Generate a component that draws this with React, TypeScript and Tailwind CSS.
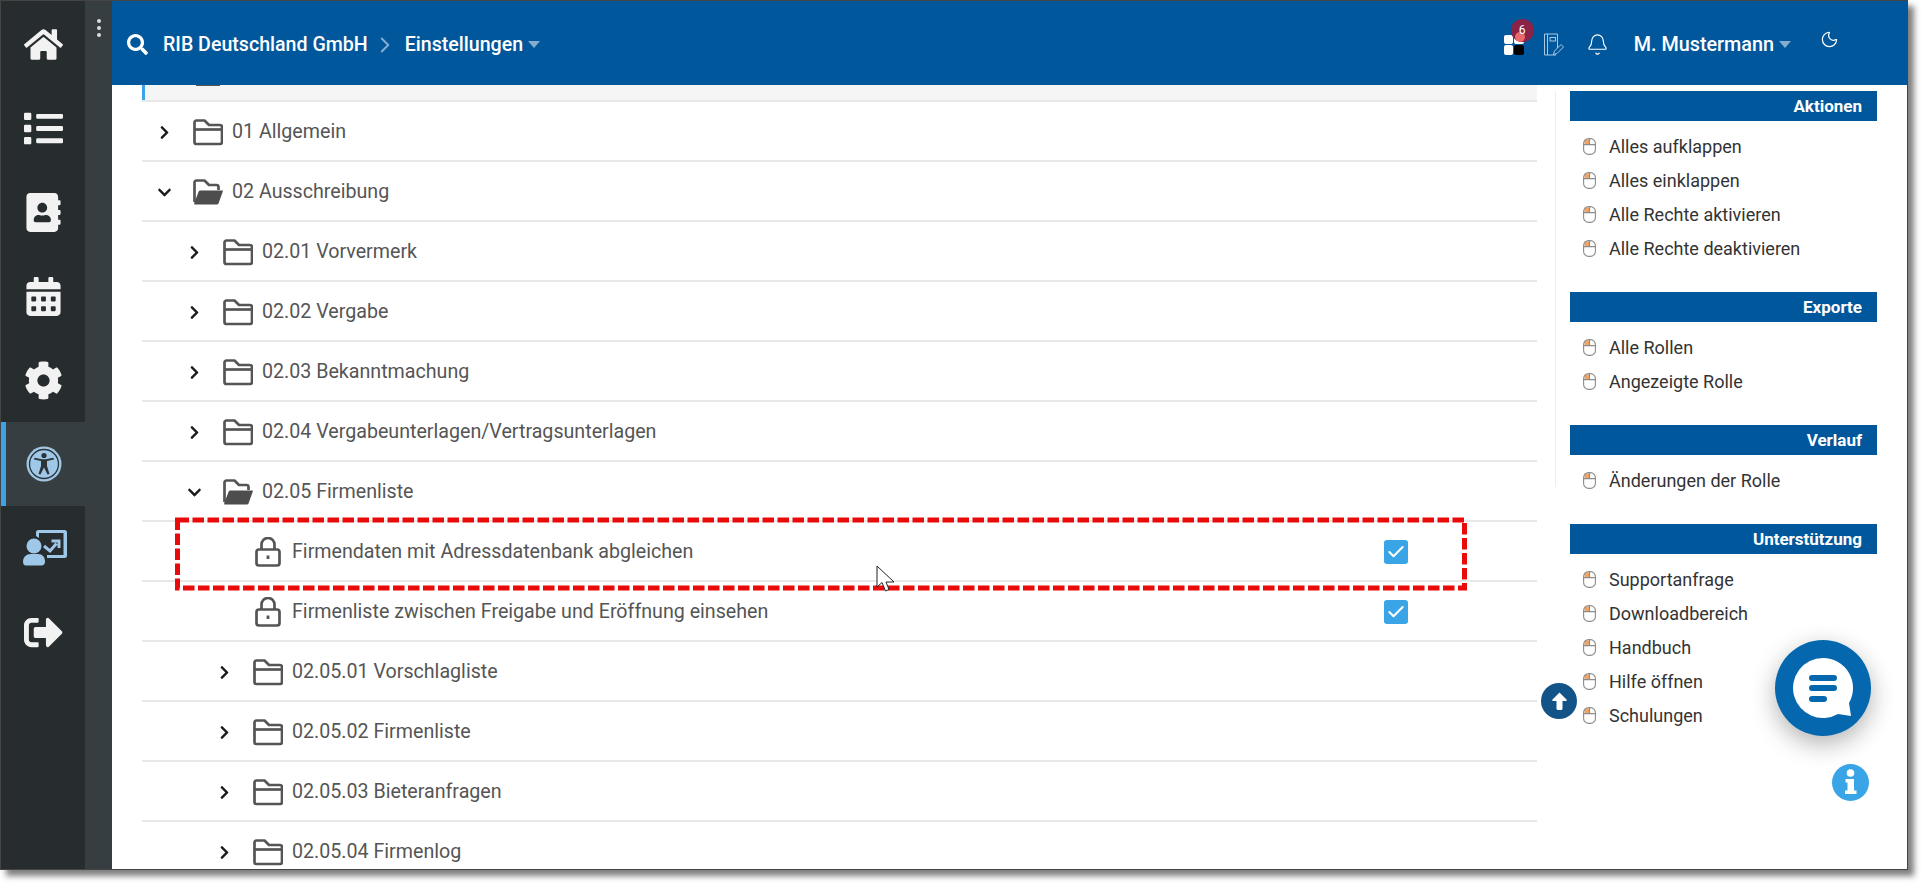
import { FaHome, FaList, FaAddressBook, FaCalendarAlt, FaCog, FaSignOutAlt, FaSearch, FaChevronRight, FaChevronDown } from "react-icons/fa";
import { Bell, Moon, Check, ChevronRight } from "lucide-react";

function AccessIcon() {
    return (
        <svg width="36" height="36" viewBox="0 0 36 36">
            <circle cx="18" cy="18" r="17.5" fill="#9fc7e8" />
            <circle cx="18" cy="18" r="14.5" fill="none" stroke="#2d3437" strokeWidth="1.3" />
            <circle cx="18" cy="9.5" r="2.6" fill="#2d3437" />
            <path d="M8 13.5L15 15V20L12.5 28L14.5 28.6L18 21.5L21.5 28.6L23.5 28L21 20V15L28 13.5L27.5 11.8L20 13.2H16L8.5 11.8Z" fill="#2d3437" />
        </svg>
    );
}

function TeacherIcon() {
    return (
        <svg width="44" height="36" viewBox="0 0 44 36" fill="#9fc7e8" className="ml-[3px]">
            <path d="M13 6V2.5A2.5 2.5 0 0 1 15.5 0H41.5A2.5 2.5 0 0 1 44 2.5V25.500A2.500 2.500 0 0 1 41.500 28H24V25H40.500V3H16V8Z" />
            <circle cx="11" cy="16" r="7.500" />
            <path d="M0 31.500C0 27 3.500 24 7.500 24H15C19.500 24 22 27.500 22 31.500C22 34.500 20 35.500 18.500 35.500H3C1 35.500 0 34 0 31.500Z" />
            <path d="M21 16L27 21L33.500 13.500M28.500 11H36V18" fill="none" stroke="#9fc7e8" strokeWidth="3" />
        </svg>
    );
}

const navItems = [
    { icon: <FaHome size={39} /> },
    { icon: <FaList size={39} /> },
    { icon: <FaAddressBook size={39} /> },
    { icon: <FaCalendarAlt size={39} /> },
    { icon: <FaCog size={39} /> },
    { icon: <AccessIcon />, active: true },
    { icon: <TeacherIcon /> },
    { icon: <FaSignOutAlt size={39} /> },
];

type Row = { label: string; level: number; kind: "closed" | "open" | "lock"; checked?: boolean };

const rows: Row[] = [
    { label: "01 Allgemein", level: 0, kind: "closed" },
    { label: "02 Ausschreibung", level: 0, kind: "open" },
    { label: "02.01 Vorvermerk", level: 1, kind: "closed" },
    { label: "02.02 Vergabe", level: 1, kind: "closed" },
    { label: "02.03 Bekanntmachung", level: 1, kind: "closed" },
    { label: "02.04 Vergabeunterlagen/Vertragsunterlagen", level: 1, kind: "closed" },
    { label: "02.05 Firmenliste", level: 1, kind: "open" },
    { label: "Firmendaten mit Adressdatenbank abgleichen", level: 2, kind: "lock", checked: true },
    { label: "Firmenliste zwischen Freigabe und Eröffnung einsehen", level: 2, kind: "lock", checked: true },
    { label: "02.05.01 Vorschlagliste", level: 2, kind: "closed" },
    { label: "02.05.02 Firmenliste", level: 2, kind: "closed" },
    { label: "02.05.03 Bieteranfragen", level: 2, kind: "closed" },
    { label: "02.05.04 Firmenlog", level: 2, kind: "closed" },
];

const panels = [
    { title: "Aktionen", items: ["Alles aufklappen", "Alles einklappen", "Alle Rechte aktivieren", "Alle Rechte deaktivieren"] },
    { title: "Exporte", items: ["Alle Rollen", "Angezeigte Rolle"] },
    { title: "Verlauf", items: ["Änderungen der Rolle"] },
    { title: "Unterstützung", items: ["Supportanfrage", "Downloadbereich", "Handbuch", "Hilfe öffnen", "Schulungen"] },
];

function FolderClosed() {
    return (
        <svg width="30" height="27" viewBox="0 0 30 27" fill="none" stroke="#555" strokeWidth="2.7" strokeLinejoin="round">
            <path d="M1.5 23V3.5A2 2 0 0 1 3.5 1.5H11.5L16 6H27A2 2 0 0 1 29 8V23A2 2 0 0 1 27 25H3.5A2 2 0 0 1 1.5 23Z" />
            <path d="M1.5 10.5H29" />
        </svg>
    );
}

function FolderOpen() {
    return (
        <svg width="30" height="27" viewBox="0 0 30 27" fill="none">
            <path d="M1.5 23V3.5A2 2 0 0 1 3.5 1.5H11.5L16 6H23.5A2 2 0 0 1 25.5 8V11" stroke="#555" strokeWidth="2.7" strokeLinejoin="round" />
            <path d="M7.5 11.5H29.2C29.8 11.5 30 12 29.8 12.5L25.5 24.5C25.3 25.2 24.8 25.5 24 25.5H2.2C1.2 25.5 1 25 1.2 24.2L5.5 13C5.9 12 6.5 11.5 7.500 11.500Z" fill="#4d4d4d" />
        </svg>
    );
}

function LockIcon() {
    return (
        <svg width="26" height="30" viewBox="0 0 26 30" fill="none" stroke="#555" strokeWidth="2.7" className="ml-[2px]">
            <rect x="1.5" y="12.5" width="23" height="16" rx="2.5" />
            <path d="M6.5 12.5V7.5A6.5 6.5 0 0 1 19.5 7.5V12.5" />
            <path d="M13 18.5V22" strokeWidth="2.8" />
        </svg>
    );
}

function MouseIcon() {
    return (
        <svg width="13" height="17" viewBox="0 0 13 17" fill="none" className="shrink-0">
            <rect x="1.5" y="1.5" width="4.5" height="5" fill="#f4a460" />
            <rect x="0.6" y="0.6" width="11.8" height="15.8" rx="5" stroke="#8c8c8c" strokeWidth="1.1" />
            <path d="M0.6 6.6H12.4M6.5 0.6V6.6" stroke="#8c8c8c" strokeWidth="1.1" />
        </svg>
    );
}

function Caret() {
    return <span className="block h-0 w-0 border-x-[6.5px] border-t-[7px] border-x-transparent border-t-[#86add0]" />;
}

function TreeRow({ row }: { row: Row }) {
    return (
        <div className="flex h-[60px] shrink-0 items-center border-b-2 border-[#e8e8e8] pr-[129px] pt-[2px]">
            <div className="flex items-center" style={{ paddingLeft: row.level * 30 }}>
                <span className="flex w-[51px] shrink-0 items-center justify-center pr-[6px] text-[#1c1c1c]">
                    {row.kind === "closed" && <FaChevronRight size={15} />}
                    {row.kind === "open" && <FaChevronDown size={15} />}
                </span>
                <span className="flex w-[39px] shrink-0 items-center">
                    {row.kind === "closed" && <FolderClosed />}
                    {row.kind === "open" && <FolderOpen />}
                    {row.kind === "lock" && <LockIcon />}
                </span>
            </div>
            <span className="text-[19.65px] text-[#555]">{row.label}</span>
            {row.checked && (
                <span className="ml-auto flex h-6 w-6 items-center justify-center rounded-[3px] bg-[#3aa5e6] text-white">
                    <Check size={20} strokeWidth={2.5} />
                </span>
            )}
        </div>
    );
}

function JournalIcon() {
    return (
        <svg width="22" height="23" viewBox="0 0 22 23" fill="none" stroke="#a9c8e2" strokeWidth="1">
            <path d="M14.5 15V1H1.5V22H13" />
            <path d="M4.5 1V22" />
            <rect x="7" y="4.5" width="5.5" height="3.5" />
            <path d="M10.5 21.5L11.5 18L18 11.5L20.5 14L14 20.5Z" />
        </svg>
    );
}

export default function App() {
    return (
        <div className="h-[885px] w-[1923px] overflow-hidden bg-white font-['Roboto',sans-serif]">
            <div className="relative flex h-[870px] w-[1908px] overflow-hidden border border-[#444] shadow-[6px_6px_6px_rgba(0,0,0,0.5)]">
                <nav className="flex w-[111px] shrink-0 flex-col bg-[#373e41]">
                    <div className="flex w-[84px] flex-1 flex-col bg-[#272c2e] pt-[1px]">
                        {navItems.map((item, i) => (
                            <div key={i} className={`flex h-[84px] items-center justify-center text-[#f2f2f2] ${item.active ? "border-l-[5px] border-[#3aa5e6] bg-[#373e41] pr-[4px]" : ""}`}>
                                {item.icon}
                            </div>
                        ))}
                    </div>
                </nav>

                <div className="absolute left-[96px] top-[18px] flex flex-col gap-[3px]">
                    <span className="h-[4px] w-[4px] rounded-full bg-[#ddd]" />
                    <span className="h-[4px] w-[4px] rounded-full bg-[#ddd]" />
                    <span className="h-[4px] w-[4px] rounded-full bg-[#ddd]" />
                </div>

                <div className="flex min-w-0 flex-1 flex-col">
                    <header className="flex h-[84px] shrink-0 items-center bg-[#01579b] pl-[15px] pr-[68px] pt-[3px] text-white">
                        <FaSearch size={21} />
                        <span className="ml-[15px] text-[19.6px] font-medium">RIB Deutschland GmbH</span>
                        <ChevronRight size={26} strokeWidth={1.8} className="ml-[4px] text-[#86add0]" />
                        <span className="ml-[7px] text-[19.6px] font-medium">Einstellungen</span>
                        <span className="ml-[5px]"><Caret /></span>
                        <div className="ml-auto flex items-center">
                            <div className="relative grid h-[20px] w-[20px] grid-cols-2 gap-[1px]">
                                <span className="rounded-[2px] bg-white" />
                                <span className="rounded-[2px] bg-white" />
                                <span className="rounded-[2px] bg-white" />
                                <span className="rounded-[2px] bg-black" />
                                <span className="absolute left-[7px] -top-[16px] h-[23px] w-[23px] overflow-hidden rounded-full bg-[#8b2346]">
                                    <span className="absolute left-[4px] top-[13px] h-[10px] w-[10px] rounded-full bg-[#e86a6a]" />
                                    <span className="absolute inset-0 flex items-center justify-center text-[12px] text-white">6</span>
                                </span>
                            </div>
                            <span className="ml-[19px]"><JournalIcon /></span>
                            <Bell size={23} strokeWidth={1.2} className="ml-[21px]" />
                            <span className="ml-[25px] text-[19.8px] font-medium">M. Mustermann</span>
                            <span className="ml-[5px]"><Caret /></span>
                            <Moon size={19} strokeWidth={1.5} className="mb-[10px] ml-[29px]" />
                        </div>
                    </header>

                    <div className="flex min-h-0 flex-1">
                        <main className="ml-[30px] flex w-[1395px] shrink-0 flex-col overflow-hidden">
                            <div className="flex h-[17px] shrink-0 border-b-2 border-[#e8e8e8] bg-[#f5f5f5]">
                                <span className="w-[3px] bg-[#3aa5e6]" />
                                <span className="ml-[51px] h-[1px] w-[24px] bg-[#555]" />
                            </div>
                            {rows.map((row) => (
                                <TreeRow key={row.label} row={row} />
                            ))}
                        </main>

                        <aside className="relative ml-[18px] flex min-w-0 flex-1 flex-col pt-[6px]">
                            <span className="absolute left-0 top-[6px] h-[396px] w-[1px] bg-[#eee]" />
                            {panels.map((panel) => (
                                <section key={panel.title} className="pb-[27px]">
                                    <h3 className="ml-[15px] flex h-[30px] w-[307px] items-center justify-end bg-[#01579b] pr-[15px] pt-[1px] text-[17px] font-bold text-white">{panel.title}</h3>
                                    <ul className="pt-[8px]">
                                        {panel.items.map((item) => (
                                            <li key={item} className="flex h-[34px] items-center pl-[28px] text-[18px] text-[#333]">
                                                <MouseIcon />
                                                <span className="ml-[13px]">{item}</span>
                                            </li>
                                        ))}
                                    </ul>
                                </section>
                            ))}
                        </aside>
                    </div>
                </div>

                {/* annotation + floating buttons */}
                <svg width="1300" height="80" className="absolute left-[169px] top-[512px]" fill="none">
                    <rect x="7.5" y="7" width="1287" height="68" stroke="#e90a0a" strokeWidth="5" strokeDasharray="11.5 3.5" />
                </svg>
                <svg width="20" height="28" viewBox="0 0 20 28" className="absolute left-[875px] top-[564px]">
                    <path d="M1 1V22L6 17.5L9.5 26L13 24.5L10 17H18Z" fill="#fff" stroke="#222" strokeWidth="1" />
                </svg>
                <div className="absolute left-[1540px] top-[682px] flex h-9 w-9 items-center justify-center rounded-full bg-[#135488]">
                    <svg width="15" height="18" viewBox="0 0 15 18" fill="#fff">
                        <path d="M7.500 0.500L14.500 7.500C15 8 14.800 9 14 9H10.500V16.500C10.500 17.300 10 18 9 18H6C5 18 4.500 17.300 4.500 16.500V9H1C0.200 9 0 8 0.500 7.500Z" />
                    </svg>
                </div>
                <div className="absolute left-[1774px] top-[639px] flex h-24 w-24 items-center justify-center rounded-full bg-[#0568ae] shadow-[0_8px_24px_rgba(0,0,0,0.3)]">
                    <svg width="60" height="60" viewBox="0 0 60 60">
                        <path d="M30 0A30 30 0 1 0 45 56L58 58L56 45A30 30 0 0 0 30 0Z" fill="#fff" />
                        <rect x="16" y="17" width="28" height="6" rx="3" fill="#0568ae" />
                        <rect x="16" y="27" width="28" height="6" rx="3" fill="#0568ae" />
                        <rect x="16" y="38" width="18" height="6" rx="3" fill="#0568ae" />
                    </svg>
                </div>
                <svg width="37" height="37" viewBox="0 0 37 37" className="absolute left-[1831px] top-[763px]">
                    <circle cx="18.500" cy="18.500" r="18.500" fill="#3aa5e6" />
                    <circle cx="18.500" cy="9" r="3.800" fill="#fff" />
                    <path d="M13.500 15H22V26.500H24.500V30H13V26.500H15.500V18.500H13.500Z" fill="#fff" />
                </svg>
            </div>
        </div>
    );
}
